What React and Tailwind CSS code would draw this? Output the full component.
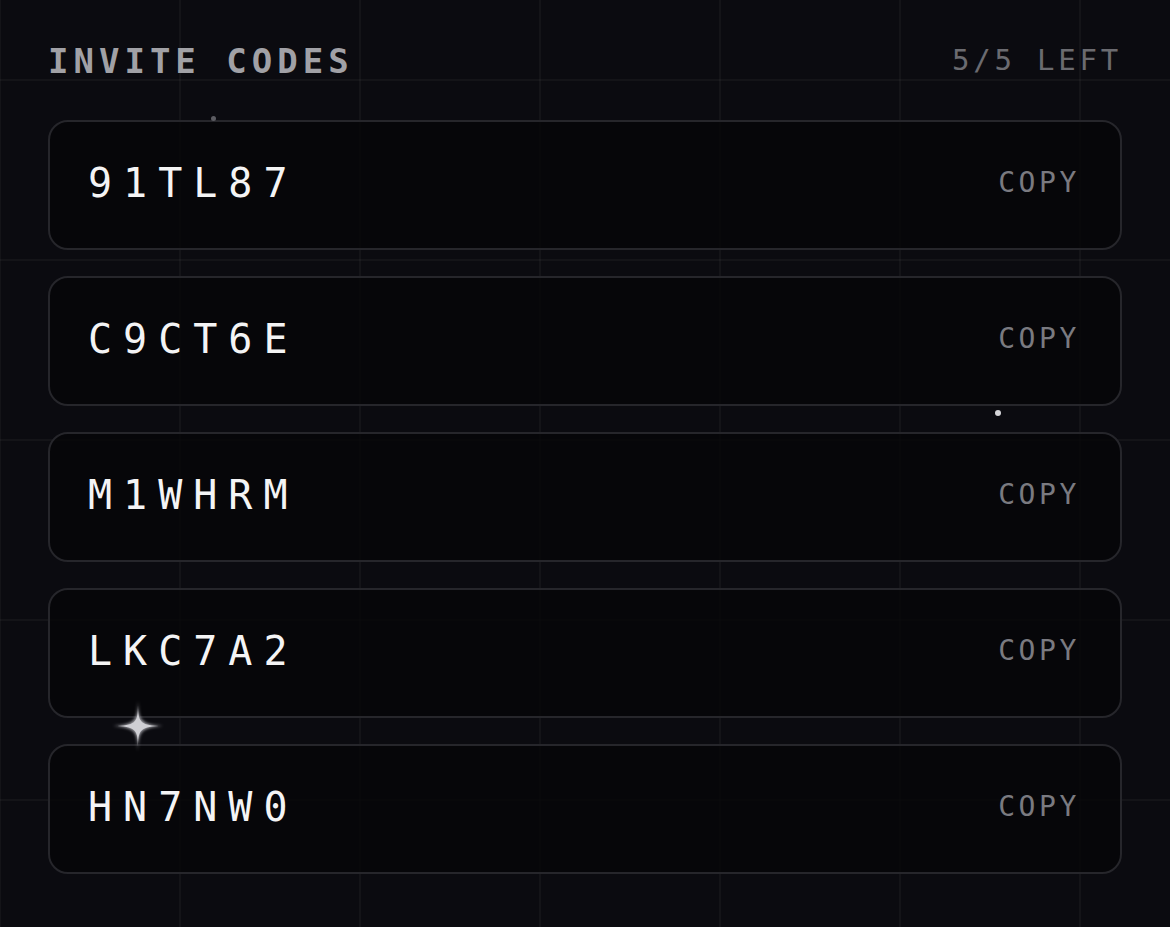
const codes = ["91TL87", "C9CT6E", "M1WHRM", "LKC7A2", "HN7NW0"];

const mono = "font-['DejaVu_Sans_Mono','Liberation_Mono',monospace]";

function Sparkle({ className }) {
  return (
    <svg className={className} viewBox="0 0 48 48" fill="none">
      <defs>
        <filter id="glow" x="-50%" y="-50%" width="200%" height="200%">
          <feGaussianBlur stdDeviation="1.3" />
        </filter>
      </defs>
      <path
        d="M24 1 C24.7 18 25.4 22.6 47 24 C25.4 25.4 24.7 30 24 47 C23.3 30 22.6 25.4 1 24 C22.6 22.6 23.3 18 24 1 Z"
        fill="#9d9da3"
        filter="url(#glow)"
      />
      <path
        d="M24 5 C24.4 19 25 23 43 24 C25 25 24.4 29 24 43 C23.6 29 23 25 5 24 C23 23 23.6 19 24 5 Z"
        fill="#cfcfd4"
      />
    </svg>
  );
}

function CodeRow({ code }) {
  return (
    <div className="flex h-[130px] items-center justify-between rounded-[20px] border-2 border-[#26262b] bg-[#050508]/80 pl-[38px] pr-[40px] pb-[4px]">
      <span className={`${mono} text-[40px] leading-none tracking-[11px] text-[#f4f4f5]`}>
        {code}
      </span>
      <button className={`${mono} text-[28px] leading-none tracking-[3.6px] text-[#7a7a80]`}>
        COPY
      </button>
    </div>
  );
}

export default function App() {
  return (
    <div className="relative min-h-[927px] w-full overflow-hidden bg-[#0b0b10] bg-[linear-gradient(to_right,rgba(255,255,255,0.035)_2px,transparent_2px),linear-gradient(to_bottom,rgba(255,255,255,0.035)_2px,transparent_2px)] bg-[size:180px_180px] bg-[position:179px_79px]">
      <main className="px-[48px] pt-[44px]">
        <div className="mb-[43px] flex h-[33px] items-center justify-between">
          <h1 className={`${mono} text-[34px] font-bold leading-none tracking-[5px] text-[#a1a1a6]`}>
            INVITE CODES
          </h1>
          <span className={`${mono} text-[29px] leading-none tracking-[3.8px] text-[#6b6b70]`}>
            5/5 LEFT
          </span>
        </div>

        <div className="flex flex-col gap-[26px]">
          {codes.map((code) => (
            <CodeRow key={code} code={code} />
          ))}
        </div>
      </main>

      {/* drifting particles */}
      <span className="absolute left-[211px] top-[116px] h-[5px] w-[5px] rounded-full bg-[#5c5c62]" />
      <span className="absolute left-[995px] top-[410px] h-[6px] w-[6px] rounded-full bg-[#d4d4d8]" />
      <Sparkle className="absolute left-[112px] top-[700px] h-[52px] w-[52px]" />
    </div>
  );
}
